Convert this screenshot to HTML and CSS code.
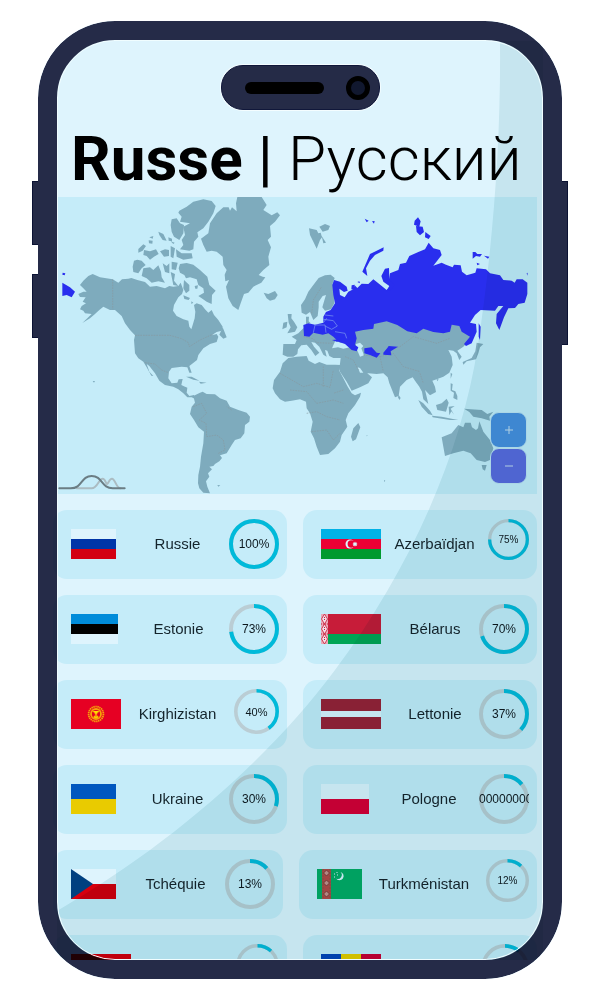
FILE: index.html
```html
<!DOCTYPE html>
<html lang="fr">
<head>
<meta charset="utf-8">
<meta name="viewport" content="width=device-width, initial-scale=1">
<title>Russe</title>
<link rel="stylesheet" href="styles.css">
</head>
<body>
<div class="device">
  <span class="side side-up"></span>
  <span class="side side-down"></span>
  <span class="side side-power"></span>
  <div class="phone">
    <main class="content">
      <h1 class="title"><strong>Russe</strong> <span class="bar">|</span> Русский</h1>
      <section class="map" aria-label="Carte">
        <svg class="world" viewBox="21 21 1440 891">
          <g class="land">
            <path d="M128 252L150 262 188 268 205 278 216 268 235 266 244 264 262 270 285 276 300 290 320 288 345 295 358 288 370 290 385 288 392 278 400 300 396 312 385 322 372 345 369 362 380 378 400 388 415 392 418 410 424 418 428 405 434 385 436 365 432 345 440 340 455 345 465 358 475 368 485 360 492 375 505 390 518 410 515 422 500 426 485 436 500 432 505 440 500 456 480 462 460 475 445 495 441 510 418 528 425 548 418 548 412 532 395 530 365 534 357 545 355 565 365 580 382 578 386 568 398 567 394 585 405 590 412 593 410 608 418 618 432 615 437 628 425 622 412 622 400 610 385 598 370 590 345 585 328 572 315 550 298 528 290 522 298 545 310 558 304 557 290 532 280 515 265 505 255 490 252 450 255 436 240 420 225 400 215 378 195 360 180 360 160 350 148 360 135 372 120 385 97 399 115 382 125 372 105 370 100 362 90 358 95 348 108 340 98 335 107 322 90 321 85 312 100 305 110 305 100 295 90 285 100 272 115 258Z"/>
            <path d="M390 222L410 219 430 224 450 240 472 260 478 285 497 302 486 315 485 342 470 335 455 325 445 318 462 308 460 295 445 285 440 268 420 262 408 265 403 255 390 248 386 235ZM402 270L418 285 418 302 408 310 400 295ZM400 316L420 324 416 330 403 327ZM424 334L430 338 424 342ZM434 288L444 286 442 296 436 296ZM280 235L300 232 310 240 325 226 333 245 335 262 345 278 325 274 305 278 290 265 275 258ZM252 212L262 209 275 212 287 225 275 235 265 250 250 246 248 230ZM282 180L300 184 318 178 326 192 312 200 300 209 290 198 280 195ZM265 177L280 163 288 168 278 182 265 188ZM296 151L308 152 307 161 297 160ZM298 142L310 138 308 146ZM325 125L340 132 350 152 338 150 328 135ZM355 142L366 146 366 154 356 152ZM362 154L374 158 370 162ZM330 184L345 178 357 180 357 198 342 200ZM362 168L375 175 370 205 362 200ZM378 178L395 190 425 190 428 205 400 209 380 200ZM365 215L383 218 378 240 365 238ZM338 220L350 228 358 220 358 250 345 246ZM362 246L375 252 372 272 385 288 370 285ZM365 88L380 85 390 100 402 105 400 130 388 150 372 140 365 125 362 105Z"/>
            <path d="M388 62L410 50 430 35 460 28 485 33 497 48 490 70 475 95 460 115 442 127 445 140 432 155 430 178 418 182 390 178 400 165 395 150 405 135 400 110 420 100 390 95 395 80 385 68Z"/>
            <path d="M558 40L562 21 635 21 650 45 640 60 665 76 682 67 690 76 675 95 660 108 663 140 653 150 663 172 655 200 658 225 640 240 626 255 638 260 646 262 634 278 610 290 595 308 582 312 572 340 565 360 548 348 535 325 528 290 537 270 526 274 524 254 530 240 520 225 518 200 500 185 485 182 470 185 460 165 453 146 475 130 480 100 500 70 520 52 536 52 540 62 546 52 560 64Z"/>
            <path d="M641 308L655 312 675 303 683 315 675 328 660 332 650 325ZM713 372L725 372 724 385 732 395 742 412 735 425 712 430 722 412 716 398ZM700 398L712 395 710 412 697 418ZM508 434L518 412 530 442 520 446ZM408 560L425 560 448 572 430 569ZM447 575L470 578 452 581ZM128 573L135 573 132 578ZM502 885L511 886 505 890Z"/>
            <path d="M430 618L450 608 458 605 470 612 495 613 510 625 530 632 540 650 565 660 590 668 600 680 598 695 585 705 583 730 572 745 555 750 545 765 530 790 510 796 516 804 508 814 495 822 490 828 478 830 486 838 474 850 478 860 468 874 472 890 480 910 460 908 448 895 444 880 445 855 450 830 453 800 460 760 462 725 445 712 432 690 420 672 425 650 435 638Z"/>
            <path d="M753 345L765 328 775 305 790 285 806 264 825 256 842 254 854 264 848 280 853 310 853 340 843 358 825 362 817 352 824 328 828 315 818 318 806 335 806 352 803 378 790 390 780 366 768 374 755 368ZM768 380L777 380 776 394 782 400 768 402Z"/>
            <path d="M725 440L745 430 760 415 850 405 900 420 925 400 1010 380 1245 400 1262 440 1250 460 1240 470 1222 482 1235 500 1228 510 1220 490 1210 482 1195 480 1205 500 1208 525 1198 548 1180 560 1160 568 1147 572 1155 590 1158 606 1140 616 1125 600 1130 620 1135 642 1120 628 1116 605 1108 590 1095 572 1088 562 1070 570 1050 590 1046 618 1035 622 1018 580 1013 562 1000 550 980 552 955 550 940 548 930 534 923 532 930 548 950 548 966 562 955 580 930 592 905 602 890 575 870 545 868 538 872 504 850 504 838 498 832 482 825 480 830 500 820 494 808 470 795 458 784 456 792 470 808 488 796 498 784 480 770 464 754 466 744 478 742 492 730 500 712 500 698 494 700 462 735 462 740 450Z"/>
            <path d="M715 504L740 500 770 498 776 512 795 522 808 516 830 524 856 524 872 525 868 542 880 565 892 588 905 610 915 616 933 608 930 620 915 645 895 670 887 690 892 710 875 735 870 755 855 775 835 792 810 795 800 770 792 745 782 725 788 695 780 670 770 655 768 635 750 628 725 632 705 635 690 628 675 610 668 595 672 570 690 545 698 520ZM925 699L931 712 918 748 908 754 903 740 910 715Z"/>
            <path d="M1046 615L1052 624 1048 630 1044 622ZM777 115L800 120 805 130 812 128 816 142 810 150 800 176 790 155 780 135ZM808 110L825 102 840 108 835 120 818 125ZM815 138L828 158 820 160ZM1280 458L1300 462 1290 472 1285 490 1278 508 1250 514 1240 524 1238 516 1265 504 1276 484ZM1202 548L1207 552 1202 566ZM1160 568L1166 568 1162 574ZM1202 580L1208 582 1206 600 1216 604 1222 618 1222 630 1210 624 1212 608 1202 602ZM1105 630L1120 640 1140 662 1148 676 1135 672 1115 650ZM1146 677L1175 680 1205 686 1225 690 1200 690 1148 682ZM1158 645L1175 640 1190 626 1196 638 1188 665 1162 660ZM1196 650L1214 648 1202 656 1212 674 1204 664 1198 676ZM1242 656L1262 658 1295 660 1312 672 1330 665 1318 680 1320 692 1295 685 1270 680 1258 666Z"/>
            <path d="M1175 742L1205 730 1225 705 1240 712 1245 698 1262 698 1266 712 1278 720 1284 715 1288 694 1300 725 1320 750 1330 775 1320 810 1305 816 1280 810 1262 790 1240 782 1210 790 1185 798 1180 770ZM1295 825L1310 825 1305 842 1298 838ZM1002 870L1006 872 1002 876ZM950 735L953 737 950 739Z"/>
          </g>
          <g class="sea">
            <path d="M846 475L856 452 872 458 892 458 900 472 880 476 864 472ZM918 462L930 458 940 468 934 475 942 496 930 500 924 486 918 474Z"/>
          </g>
          <g class="borders">
            <path d="M188 268V358M255 436H360L395 446 415 458 418 470 450 450 490 432M285 518L315 522 335 540 355 548M430 650L455 640 470 670 448 690 468 700 470 740 500 735 520 750 525 780 505 790M545 660L530 650M690 550L760 590 800 580 840 592 850 540M720 600L770 605 800 640 850 630 880 640M770 670L800 665 830 680 870 690M785 725L830 720 850 750 870 730M820 590V530M880 600L850 610M785 370L790 330 815 290M760 440L790 446 800 458 850 460M885 500L910 510 925 540M940 495L990 500 1000 545M990 500L1030 490 1060 530 1110 545M1010 480L1050 470 1090 440 1160 460 1200 445M1110 550L1120 580"/>
          </g>
          <g class="speakers">
            <path d="M852 270L870 275 890 290 893 302 882 306 868 296 870 315 884 322 895 305 910 298 914 286 922 294 935 281 955 282 970 268 985 280 1010 300 1024 290 1016 274 1020 250 1045 240 1050 222 1068 218 1078 198 1105 186 1125 178 1136 158 1150 175 1170 180 1175 195 1150 227 1175 218 1188 224 1208 232 1212 224 1232 226 1236 245 1250 256 1276 248 1280 235 1308 238 1320 250 1350 256 1360 270 1385 272 1394 278 1400 268 1418 268 1432 278 1432 312 1424 338 1405 342 1395 354 1375 355 1362 382 1348 420 1338 400 1340 372 1360 348 1345 348 1335 362 1292 360 1275 375 1260 398 1278 402 1280 425 1265 460 1248 468 1242 462 1260 440 1235 425 1228 408 1205 404 1200 425 1180 430 1150 426 1120 416 1100 430 1072 424 1042 405 1010 394 972 402 970 416 940 420 915 425 920 445 915 465 925 472 920 484 905 480 885 462 865 455 850 440 835 430 818 434 790 428 778 440 762 438 760 405 775 400 795 404 820 398 820 380 828 366 842 360 855 340 850 315 847 285Z"/>
            <path d="M1001 172L980 182 960 192 950 215 937 245 952 258 948 235 960 212 975 195 1000 182ZM1005 236L1017 234 1018 270 1034 285 1020 302 1008 304 1018 288 1000 275 994 258ZM1094 92L1104 82 1112 94 1108 110 1092 104ZM1098 108L1118 110 1122 126 1110 136 1100 126ZM1126 126L1142 138 1136 147 1125 142ZM944 86L956 92 950 97ZM966 94L974 93 972 101ZM1268 186L1276 186 1282 192 1296 192 1290 200 1278 198 1268 206ZM1302 197L1318 200 1314 206ZM1280 218L1290 222 1282 226ZM1286 400L1292 410 1290 450 1286 440ZM1430 250L1433 248 1432 257ZM38 248L46 250 44 256 37 254ZM37 278L60 292 75 305 65 322 50 315 37 318ZM905 286L914 284 912 300 904 298ZM922 276L928 274 930 280Z"/>
            <path d="M943 475L965 472 980 488 991 490 980 503 960 495 943 490ZM1000 488L1012 474 1016 468 1044 470 1022 484 1024 496 1000 494ZM846 450L868 448 862 456Z"/>
          </g>
          <path class="inner" d="M790 428L795 405 825 405 828 428M820 388L850 392 862 408 845 418 825 408M825 375L850 378M855 425L885 430 890 445M820 398L830 385"/>
          <path class="trail" d="M80 895H125C143 895 146 866 158 866 166 866 166 880 171 882 177 880 177 866 186 866 196 866 198 895 212 895"/>
          <path class="crest" d="M28 895H62C98 895 92 858 125 858 158 858 154 895 188 895H224" transform="translate(0 0)"/>
        </svg>
        <div class="zoom">
          <button class="zoom-btn zoom-in" type="button" aria-label="Agrandir"><svg viewBox="0 0 10 10"><path d="M5 1V9M1 5H9"/></svg></button>
          <button class="zoom-btn zoom-out" type="button" aria-label="Réduire"><svg viewBox="0 0 10 10"><path d="M1 5H9"/></svg></button>
        </div>
      </section>
      <section class="list">
        <div class="row">
          <article class="card">
            <svg class="flag w45" viewBox="0 0 45 30"><path fill="#def4fd" d="M0 0h45v10H0z"/><path fill="#0035a8" d="M0 10h45v10H0z"/><path fill="#d30012" d="M0 20h45v10H0z"/></svg>
            <span class="name">Russie</span>
            <div class="ring r50"><svg viewBox="0 0 50 50"><circle cx="25" cy="25" r="23"/><circle class="arc" cx="25" cy="25" r="23" pathLength="100" stroke-dasharray="100 0"/></svg><span>100%</span></div>
          </article>
          <article class="card">
            <svg class="flag w60" viewBox="0 0 60 30"><path fill="#00b2e6" d="M0 0h60v10H0z"/><path fill="#ec0034" d="M0 10h60v10H0z"/><path fill="#009a2f" d="M0 20h60v10H0z"/><circle cx="29" cy="15" r="4.500" fill="#def4fd"/><circle cx="30.3" cy="15" r="3.7" fill="#ec0034"/><path fill="#def4fd" d="M34 12.500l.6 1.2 1.4-.3-.5 1.2 1.2.5-1.2.5.5 1.3-1.4-.4-.6 1.3-.6-1.3-1.4.4.5-1.3-1.2-.5 1.2-.5-.5-1.2 1.4.3z"/></svg>
            <span class="name tight">Azerbaïdjan</span>
            <div class="ring r41 small"><svg viewBox="0 0 50 50"><circle cx="25" cy="25" r="23"/><circle class="arc" cx="25" cy="25" r="23" pathLength="100" stroke-dasharray="75 25"/></svg><span>75%</span></div>
          </article>
        </div>
        <div class="row">
          <article class="card">
            <svg class="flag w47" viewBox="0 0 47 30"><path fill="#008cda" d="M0 0h47v10H0z"/><path d="M0 10h47v10H0z"/><path fill="#def4fd" d="M0 20h47v10H0z"/></svg>
            <span class="name">Estonie</span>
            <div class="ring r50"><svg viewBox="0 0 50 50"><circle cx="25" cy="25" r="23"/><circle class="arc" cx="25" cy="25" r="23" pathLength="100" stroke-dasharray="73 27"/></svg><span>73%</span></div>
          </article>
          <article class="card">
            <svg class="flag w60" viewBox="0 0 60 30"><path fill="#c71c39" d="M0 0h60v20H0z"/><path fill="#00a555" d="M0 20h60v10H0z"/><path fill="#e9a9b8" d="M0 0h7v30H0z"/><path d="M3.500 0l3 5-3 5-3-5zM3.500 10l3 5-3 5-3-5zM3.500 20l3 5-3 5-3-5z" fill="#f4dfe8" stroke="#c71c39" stroke-width=".8"/><path d="M3.500 3v4M3.500 13v4M3.500 23v4M0 10h7M0 20h7" stroke="#c71c39" stroke-dasharray="1 1"/></svg>
            <span class="name">Bélarus</span>
            <div class="ring r50"><svg viewBox="0 0 50 50"><circle cx="25" cy="25" r="23"/><circle class="arc" cx="25" cy="25" r="23" pathLength="100" stroke-dasharray="70 30"/></svg><span>70%</span></div>
          </article>
        </div>
        <div class="row">
          <article class="card">
            <svg class="flag w50" viewBox="0 0 50 30"><path fill="#e60023" d="M0 0h50v30H0z"/><circle cx="25" cy="15" r="7.4" fill="none" stroke="#f5a20a" stroke-width="1.8" stroke-dasharray="1.4 .6"/><circle cx="25" cy="15" r="5" fill="none" stroke="#f5a20a" stroke-width="1.8"/><path d="M21.500 12q3.500 2 3.500 6 0-4 3.500-6M23 17h4v2h-4z" fill="#ffe000" stroke="#f5a20a" stroke-width=".7"/></svg>
            <span class="name tight">Kirghizistan</span>
            <div class="ring r45 medium"><svg viewBox="0 0 50 50"><circle cx="25" cy="25" r="23"/><circle class="arc" cx="25" cy="25" r="23" pathLength="100" stroke-dasharray="40 60"/></svg><span>40%</span></div>
          </article>
          <article class="card">
            <svg class="flag w60" viewBox="0 0 60 30"><path fill="#992338" d="M0 0h60v30H0z"/><path fill="#def4fd" d="M0 12h60v6H0z"/></svg>
            <span class="name">Lettonie</span>
            <div class="ring r50"><svg viewBox="0 0 50 50"><circle cx="25" cy="25" r="23"/><circle class="arc" cx="25" cy="25" r="23" pathLength="100" stroke-dasharray="37 63"/></svg><span>37%</span></div>
          </article>
        </div>
        <div class="row">
          <article class="card">
            <svg class="flag w45" viewBox="0 0 45 30"><path fill="#0057bf" d="M0 0h45v15H0z"/><path fill="#e9cb00" d="M0 15h45v15H0z"/></svg>
            <span class="name">Ukraine</span>
            <div class="ring r50"><svg viewBox="0 0 50 50"><circle cx="25" cy="25" r="23"/><circle class="arc" cx="25" cy="25" r="23" pathLength="100" stroke-dasharray="30 70"/></svg><span>30%</span></div>
          </article>
          <article class="card">
            <svg class="flag w48" viewBox="0 0 48 30"><path fill="#def4fd" d="M0 0h48v15H0z"/><path fill="#dc0037" d="M0 15h48v15H0z"/></svg>
            <span class="name">Pologne</span>
            <div class="ring r50 spill"><svg viewBox="0 0 50 50"><circle cx="25" cy="25" r="23"/><circle class="arc" cx="25" cy="25" r="23" pathLength="100" stroke-dasharray="14 86"/></svg><span>00000000</span></div>
          </article>
        </div>
        <div class="row wide-right">
          <article class="card">
            <svg class="flag w45" viewBox="0 0 45 30"><path fill="#def4fd" d="M0 0h45v15H0z"/><path fill="#d7000d" d="M0 15h45v15H0z"/><path fill="#004080" d="M0 0l22 15L0 30z"/></svg>
            <span class="name">Tchéquie</span>
            <div class="ring r50"><svg viewBox="0 0 50 50"><circle cx="25" cy="25" r="23"/><circle class="arc" cx="25" cy="25" r="23" pathLength="100" stroke-dasharray="13 87"/></svg><span>13%</span></div>
          </article>
          <article class="card">
            <svg class="flag w45" viewBox="0 0 45 30"><path fill="#00ab66" d="M0 0h45v30H0z"/><path fill="#b44a48" d="M5 0h9v30H5z"/><path d="M9.500 1l3 3-3 3-3-3zM9.500 11l3 3-3 3-3-3zM9.500 22l3 3-3 3-3-3z" fill="#c8908a" stroke="#7e3c3a"/><path d="M6 0v30M13 0v30" stroke="#7e5a48" stroke-width=".8" stroke-dasharray="2 1"/><path fill="#def4fd" d="M23.500 3a4.200 4.200 0 1 1-4.500 6.500 4 4 0 0 0 4.500-6.500z"/><path d="M17 5h1M19.500 3.500h1M17 8h1M20 6h1" stroke="#def4fd"/></svg>
            <span class="name tight">Turkménistan</span>
            <div class="ring r43 small"><svg viewBox="0 0 50 50"><circle cx="25" cy="25" r="23"/><circle class="arc" cx="25" cy="25" r="23" pathLength="100" stroke-dasharray="12 88"/></svg><span>12%</span></div>
          </article>
        </div>
        <div class="row">
          <article class="card">
            <svg class="flag w60" viewBox="0 0 60 30"><path fill="#d7000d" d="M0 0h60v30H0z"/></svg>
            <span class="name"></span>
            <div class="ring r43 small"><svg viewBox="0 0 50 50"><circle cx="25" cy="25" r="23"/><circle class="arc" cx="25" cy="25" r="23" pathLength="100" stroke-dasharray="12 88"/></svg></div>
          </article>
          <article class="card">
            <svg class="flag w60" viewBox="0 0 60 30"><path fill="#0046b8" d="M0 0h20v30H0z"/><path fill="#e9cb00" d="M20 0h20v30H20z"/><path fill="#cc0033" d="M40 0h20v30H40z"/></svg>
            <span class="name"></span>
            <div class="ring r48 small"><svg viewBox="0 0 50 50"><circle cx="25" cy="25" r="23"/><circle class="arc" cx="25" cy="25" r="23" pathLength="100" stroke-dasharray="11 89"/></svg></div>
          </article>
        </div>
      </section>
    </main>
    <svg class="glare" viewBox="57 41 486 919" preserveAspectRatio="none"><path d="M500 41C501 143 493 245 478 345 461 457 408 572 335 670 268 760 170 845 57 911V960H543V41Z"/></svg>
    <div class="rim"></div>
    <div class="frame"></div>
    <div class="island"><span class="speaker"></span><span class="lens"></span></div>
  </div>
</div>
</body>
</html>
```
FILE: styles.css
```css
* { box-sizing: border-box; }

body {
  margin: 0;
  background: #fff;
  color: #14242c;
  font-family: "Liberation Sans", Arial, sans-serif;
}

.device {
  position: relative;
  height: 100vh;
  min-height: 600px;
  padding: 21px 35px 29px 38px;
}

.phone {
  position: relative;
  isolation: isolate;
  display: flex;
  height: 100%;
  padding: 20px 25px 19px 15px;
  overflow: hidden;
  border-radius: 77px;
  background: #def4fd;
}

/* side keys */
.side {
  position: absolute;
  width: 12px;
  background: #252b47;
  border: 1px solid #0b1233;
}
.side-up { left: 32px; top: 181px; height: 64px; }
.side-down { left: 32px; top: 274px; height: 64px; }
.side-power { right: 29px; top: 181px; height: 164px; }

/* shell layers drawn over the content */
.frame, .glare, .rim { position: absolute; pointer-events: none; }
.frame {
  inset: 0;
  border: 19px solid #2a2d48;
  border-radius: 77px;
  mix-blend-mode: multiply;
}
.glare {
  left: 19px;
  top: 20px;
  width: calc(100% - 38px);
  height: calc(100% - 39px);
  mix-blend-mode: multiply;
}
.glare path { fill: #e4f0f1; }
.rim {
  inset: 19px;
  border: 1px solid #f0fdff;
  border-radius: 58px;
}

.island {
  position: absolute;
  top: 44px;
  left: 50%;
  display: flex;
  align-items: center;
  justify-content: space-between;
  width: 159px;
  height: 45px;
  margin-left: -79px;
  padding: 0 9px 0 23px;
  border: 1px solid #10173a;
  border-radius: 22px;
  background: #252b47;
  box-shadow: 0 0 0 1px #f4fdff;
}
.speaker {
  width: 79px;
  height: 12px;
  border-radius: 6px;
  background: #000;
}
.lens {
  width: 24px;
  height: 24px;
  border: 5px solid #000;
  border-radius: 50%;
  background: #11182f;
}

.content {
  flex: 1;
  min-width: 0;
  overflow: hidden;
}

.title {
  margin: 0;
  padding: 80px 0 0 18px;
  color: #000;
  font-family: Roboto, sans-serif;
  font-size: 62px;
  font-weight: 300;
  line-height: 76px;
  white-space: nowrap;
}
.title strong { font-weight: 700; }
.bar { font-weight: 400; }

.map {
  position: relative;
  margin-left: 4px;
  background: #c5ecf9;
}
.world { display: block; width: 100%; height: auto; }
.land { fill: #7eabbd; }
.sea { fill: #c5ecf9; }
.speakers { fill: #292eee; }
.borders, .inner, .trail, .crest { fill: none; }
.borders { stroke: #8799a0; stroke-width: 2; stroke-dasharray: 5 3; }
.inner { stroke: #7f9df0; stroke-width: 2; }
.trail { stroke: #abbcc2; stroke-width: 6; stroke-linecap: round; }
.crest { stroke: #6b7d84; stroke-width: 6; stroke-linecap: round; }

.zoom {
  position: absolute;
  right: 10px;
  bottom: 10px;
  display: grid;
}
.zoom-btn {
  display: grid;
  place-items: center;
  width: 37px;
  height: 36px;
  padding: 0;
  border: 1px solid #bfe4f4;
  border-radius: 9px;
}
.zoom-in { background: #4590de; }
.zoom-out { background: #586bdd; }
.zoom-btn svg { width: 10px; height: 10px; fill: none; stroke: #c7def0; }

.list {
  display: grid;
  gap: 16px;
  padding-top: 16px;
}
.row {
  display: grid;
  grid-template-columns: 1fr 1fr;
  gap: 16px;
}
.wide-right { grid-template-columns: 230fr 238fr; }

.card {
  display: flex;
  align-items: center;
  min-height: 69px;
  padding: 9px 8px 10px 18px;
  border-radius: 14px;
  background: #c5ecf9;
}
.flag { flex: none; height: 30px; }
.w45 { width: 45px; }
.w47 { width: 47px; }
.w48 { width: 48px; }
.w50 { width: 50px; }
.w60 { width: 60px; }

.name {
  flex: 1;
  padding-left: 10px;
  font-size: 15px;
  line-height: 20px;
  text-align: center;
}
.tight { padding-left: 0; }

.ring {
  display: grid;
  flex: none;
  align-self: flex-start;
  align-items: center;
  justify-items: center;
  overflow: hidden;
  color: #0c181e;
  font-size: 12px;
}
.ring > * { grid-area: 1 / 1; }
.ring span { z-index: 1; }
.ring svg {
  width: 100%;
  fill: none;
  stroke: #bacdd4;
  stroke-width: 4;
  transform: rotate(-90deg);
}
.ring .arc { stroke: #00bada; }
.r41 { width: 41px; }
.r43 { width: 43px; }
.r45 { width: 45px; }
.r48 { width: 48px; }
.r50 { width: 50px; }
.medium { font-size: 11px; }
.small { font-size: 10px; }
.spill { grid-template-columns: 50px; justify-items: start; }
```
